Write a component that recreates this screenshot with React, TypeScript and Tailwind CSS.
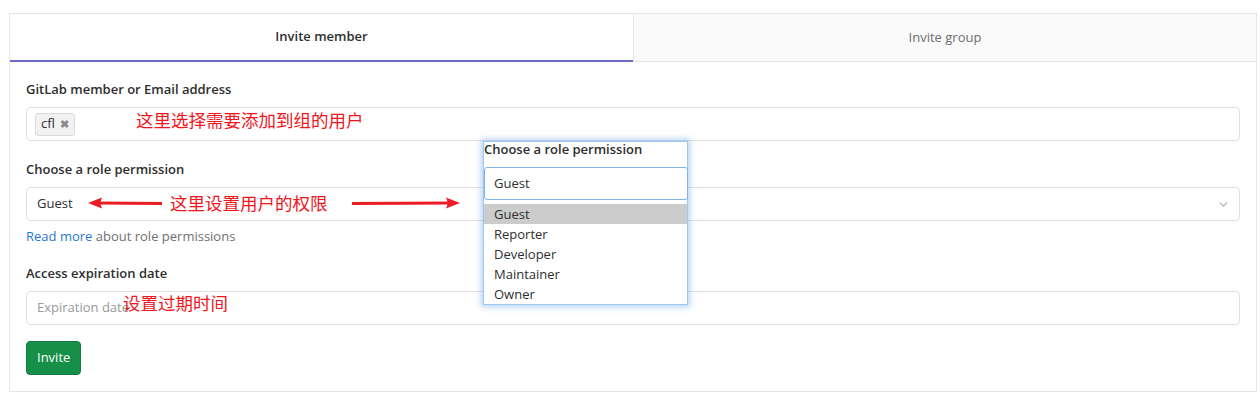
import React from 'react';
import { ChevronDown } from 'lucide-react';

const font = { fontFamily: '"Open Sans", "Noto Sans CJK SC", sans-serif' };

const roles = ['Guest', 'Reporter', 'Developer', 'Maintainer', 'Owner'];

function Arrow({ width, dir }: { width: number; dir: 'left' | 'right' }) {
    // red annotation arrow, head on the given side
    const w = width;
    return (
        <svg width={w} height="14" viewBox={`0 0 ${w} 14`} className="block">
            {dir === 'left' ? (
                <>
                    <line x1="10" y1="7" x2={w - 2} y2="7.5" stroke="#ec1c24" strokeWidth="3" />
                    <polygon points="0,7 14,1.5 12,7 14,12.5" fill="#ec1c24" />
                </>
            ) : (
                <>
                    <line x1="2" y1="7.5" x2={w - 10} y2="7" stroke="#ec1c24" strokeWidth="3" />
                    <polygon points={`${w},7 ${w - 14},1.5 ${w - 12},7 ${w - 14},12.5`} fill="#ec1c24" />
                </>
            )}
        </svg>
    );
}

export default function App() {
    return (
        <div className="relative w-[1260px] h-[406px] bg-white text-[#2e2e2e] text-[13.5px]" style={font}>
            <div className="pt-[13px] pl-[9px]">
                <div className="w-[1248px] border border-[#e5e5e5]">
                    <div className="flex h-[48px]">
                        <div className="w-[623px] flex items-center justify-center border-b-2 border-[#6b6bc8] font-semibold text-[13px] text-[#303030]">
                            Invite member
                        </div>
                        <div className="flex-1 flex items-center justify-center bg-[#fafafa] border-l border-b border-[#e5e5e5] text-[13px] text-[#6e6e6e]">
                            Invite group
                        </div>
                    </div>

                    <div className="px-4 pt-[17px] pb-[16px]">
                        <div className="font-semibold leading-5 text-[13px] mb-[8px]">GitLab member or Email address</div>
                        <div className="h-[34px] border border-[#dfdfdf] rounded flex items-center pl-[8px]">
                            <span className="h-[23px] flex items-center gap-[5px] px-[5px] bg-[#f2f2f2] border border-[#dcdcdc] rounded-[3px] text-[13px]">
                                cfl
                                <span className="text-[#8a8a8a] text-[11px] font-bold">✖</span>
                            </span>
                        </div>

                        <div className="font-semibold leading-5 text-[13px] mt-[18px] mb-[8px]">Choose a role permission</div>
                        <div className="h-[34px] border border-[#dfdfdf] rounded flex items-center justify-between pl-[10px] pr-[9px] text-[13px]">
                            <span>Guest</span>
                            <ChevronDown size={13} strokeWidth={2.5} className="text-[#b5b5b5]" />
                        </div>
                        <div className="leading-5 mt-[5px] text-[13px] text-[#707070]">
                            <span className="text-[#1f78d1]">Read more</span> about role permissions
                        </div>

                        <div className="font-semibold leading-5 text-[13px] mt-[17px] mb-[8px]">Access expiration date</div>
                        <div className="h-[34px] border border-[#dfdfdf] rounded flex items-center pl-[10px] text-[13px] text-[#999]">
                            Expiration date
                        </div>

                        <button className="mt-[16px] h-[34px] px-[10px] rounded bg-[#168f48] border border-[#127a3d] text-white text-[13px]">
                            Invite
                        </button>
                    </div>
                </div>
            </div>

            {/* open role dropdown */}
            <div className="absolute left-[483px] top-[141px] w-[205px] h-[164px] bg-white border border-[#9fc7f3] shadow-[0_0_6px_2px_rgba(110,165,240,0.5)] text-[13px]">
                <div className="font-semibold leading-[14px] h-[24px] text-[#2e2e2e]">Choose a role permission</div>
                <div className="mt-[1px] h-[33px] border border-[#7fb1ec] rounded-[3px] flex items-center pl-[9px] mr-[-1px]">Guest</div>
                <div className="mt-[4px]">
                    {roles.map((r, i) => (
                        <div key={r} className={`h-[20px] leading-[20px] pl-[10px] ${i === 0 ? 'bg-[#cccccc]' : ''}`}>{r}</div>
                    ))}
                </div>
            </div>

            {/* annotations */}
            <div className="absolute left-[136px] top-[108px] text-[17.5px] leading-6 text-[#f0161e]">这里选择需要添加到组的用户</div>
            <div className="absolute left-[88px] top-[196px]"><Arrow width={76} dir="left" /></div>
            <div className="absolute left-[170px] top-[191px] text-[17.5px] leading-6 text-[#f0161e]">这里设置用户的权限</div>
            <div className="absolute left-[350px] top-[196px]"><Arrow width={110} dir="right" /></div>
            <div className="absolute left-[123px] top-[291px] text-[17.5px] leading-6 text-[#f0161e]">设置过期时间</div>
        </div>
    );
}
